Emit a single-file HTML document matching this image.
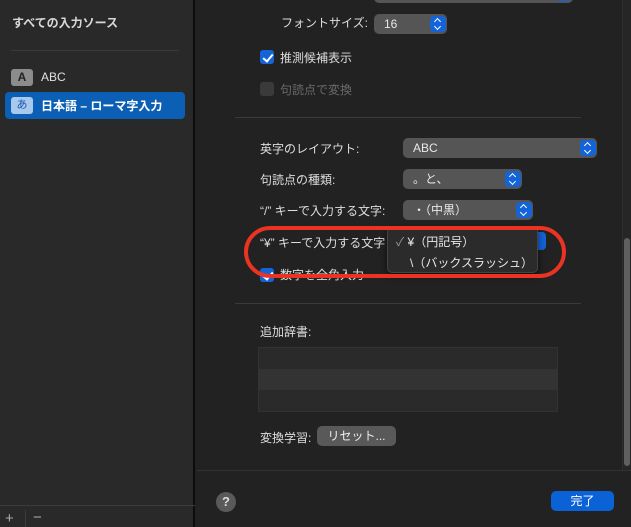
<!DOCTYPE html>
<html><head><meta charset="utf-8"><style>
*{margin:0;padding:0;box-sizing:border-box}
body{width:631px;height:527px;overflow:hidden;background:#222;font-family:"Liberation Sans","Noto Sans CJK JP",sans-serif;color:#dedede;font-size:12px;position:relative}
.a{position:absolute;white-space:nowrap}
.side{left:0;top:0;width:195px;height:527px;background:#292929;border-right:2px solid #0c0c0c}
.pop{position:absolute;background:#555;border-radius:5px;height:20px;color:#e8e8e8;font-size:12px;line-height:20px;padding-left:10px}
.pop .b{position:absolute;right:1px;top:2px;width:16px;height:16px;background:#1464d8;border-radius:4px}
.pop .b:before{content:"";position:absolute;left:5px;top:3px;width:4px;height:4px;border-left:1.5px solid #fff;border-top:1.5px solid #fff;transform:rotate(45deg)}
.pop .b:after{content:"";position:absolute;left:5px;top:8px;width:4px;height:4px;border-right:1.5px solid #fff;border-bottom:1.5px solid #fff;transform:rotate(45deg)}
.cb{position:absolute;width:14px;height:14px;border-radius:3px;background:#1464d8}
.cb:after{content:"";position:absolute;left:4.5px;top:1.5px;width:4px;height:8px;border-right:2px solid #fff;border-bottom:2px solid #fff;transform:rotate(40deg)}
.sep{position:absolute;height:1px;background:#3a3a3a}
</style></head><body>
<div class="a side"></div>
<div class="a" style="left:12px;top:14px;font-size:12px;font-weight:bold;color:#d8d8d8">すべての入力ソース</div>
<div class="sep" style="left:11px;top:50px;width:168px"></div>
<div class="a" style="left:11px;top:69px;width:22px;height:17px;background:#8c8c8c;border-radius:3px;color:#222;font-weight:bold;text-align:center;line-height:17px">A</div>
<div class="a" style="left:41px;top:70px;color:#e0e0e0">ABC</div>
<div class="a" style="left:5px;top:92px;width:180px;height:27px;background:#0b5fb5;border-radius:4px"></div>
<div class="a" style="left:11px;top:97px;width:22px;height:17px;background:#a9c8ee;border-radius:3px;color:#1a5aa8;text-align:center;line-height:17px;font-size:11px">あ</div>
<div class="a" style="left:41px;top:97px;color:#fff;font-weight:bold">日本語 – ローマ字入力</div>
<div class="sep" style="left:0;top:505px;width:195px;background:#3c3c3c"></div>
<div class="a" style="left:5px;top:510px;font-size:15px;color:#aaa">+</div>
<div class="a" style="left:25px;top:510px;width:1px;height:17px;background:#3c3c3c"></div>
<div class="a" style="left:33px;top:509px;font-size:15px;color:#aaa">−</div>

<div class="a" style="left:622px;top:0;width:9px;height:470px;background:#262626;border-left:1px solid #2e2e2e"></div>
<div class="a" style="left:624px;top:238px;width:6px;height:228px;background:#5f5f5f;border-radius:3px"></div>

<div class="pop" style="left:374px;top:-17px;width:199px"><div class="b"></div></div>
<div class="a" style="left:281px;top:14px">フォントサイズ:</div>
<div class="pop" style="left:374px;top:14px;width:73px">16<div class="b"></div></div>
<div class="cb" style="left:260px;top:50px"></div>
<div class="a" style="left:280px;top:49px">推測候補表示</div>
<div class="a" style="left:260px;top:82px;width:14px;height:14px;border-radius:3px;background:#3a3a3a"></div>
<div class="a" style="left:280px;top:81px;color:#6a6a6a">句読点で変換</div>
<div class="sep" style="left:235px;top:117px;width:346px"></div>

<div class="a" style="left:260px;top:140px">英字のレイアウト:</div>
<div class="pop" style="left:403px;top:138px;width:194px">ABC<div class="b"></div></div>
<div class="a" style="left:260px;top:171px">句読点の種類:</div>
<div class="pop" style="left:403px;top:169px;width:119px">。と、<div class="b"></div></div>
<div class="a" style="left:260px;top:202px">“/” キーで入力する文字:</div>
<div class="pop" style="left:403px;top:200px;width:130px">・（中黒）<div class="b"></div></div>
<div class="a" style="left:260px;top:234px">“¥” キーで入力する文字</div>
<div class="a" style="left:532px;top:232px;width:14px;height:18px;background:#1464d8;border-radius:4px"></div>
<div class="cb" style="left:260px;top:268px"></div>
<div class="a" style="left:280px;top:266px">数字を全角入力</div>
<div class="a" style="left:387px;top:226px;width:151px;height:47px;background:#2b2b2b;border:1px solid #444;border-radius:5px;box-shadow:0 3px 8px rgba(0,0,0,.6)"></div>
<div class="a" style="left:396px;top:233px;color:#e8e8e8"><span style="color:#999">✓</span> ¥（円記号）</div>
<div class="a" style="left:410px;top:254px;color:#e8e8e8">\（バックスラッシュ）</div>
<div class="a" style="left:244px;top:226px;width:322px;height:52px;border:4px solid #ea3322;border-radius:26px"></div>
<div class="sep" style="left:235px;top:303px;width:346px"></div>

<div class="a" style="left:260px;top:323px">追加辞書:</div>
<div class="a" style="left:258px;top:347px;width:300px;height:65px;background:#2a2a2a;border:1px solid #333"></div>
<div class="a" style="left:259px;top:369px;width:298px;height:21px;background:#333"></div>
<div class="a" style="left:260px;top:429px">変換学習:</div>
<div class="a" style="left:317px;top:426px;width:79px;height:20px;background:#595959;border-radius:5px;text-align:center;line-height:20px;color:#eee">リセット...</div>

<div class="sep" style="left:197px;top:470px;width:434px;background:#333"></div>
<div class="a" style="left:216px;top:492px;width:20px;height:20px;border-radius:50%;background:#5a5a5a;color:#ddd;text-align:center;line-height:20px;font-weight:bold;font-size:13px">?</div>
<div class="a" style="left:551px;top:491px;width:63px;height:20px;background:#0a62d6;border-radius:5px;text-align:center;line-height:20px;color:#fff">完了</div>
</body></html>
